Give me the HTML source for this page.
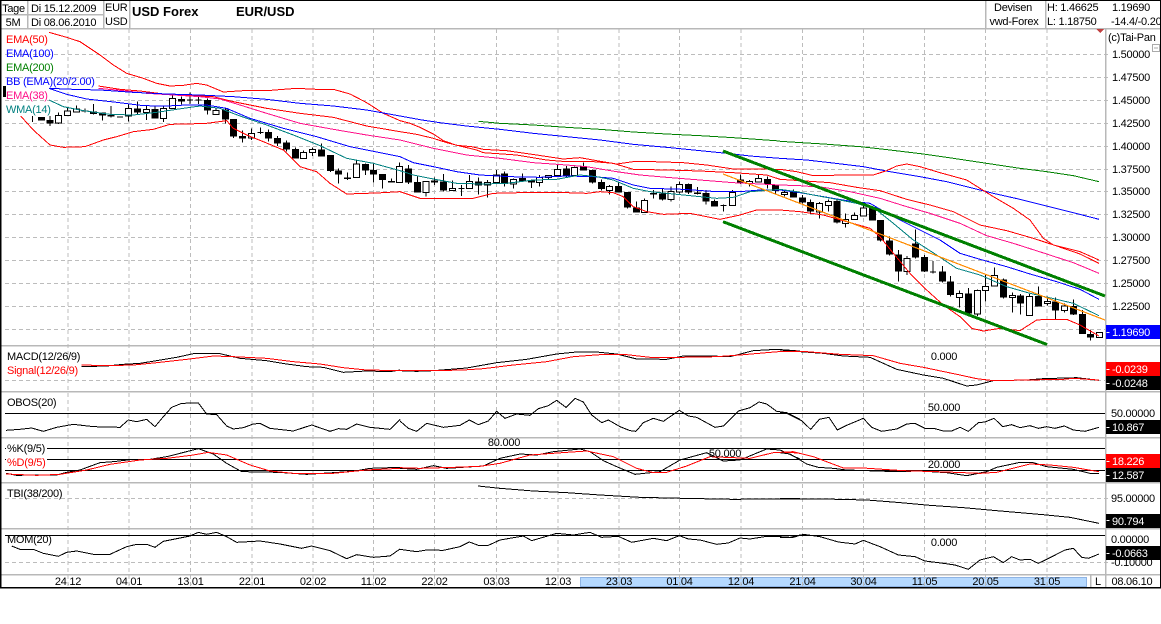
<!DOCTYPE html>
<html><head><meta charset="utf-8"><title>EUR/USD</title>
<style>
html,body{margin:0;padding:0;background:#fff;width:1161px;height:624px;overflow:hidden}
svg{display:block}
text{font-family:"Liberation Sans",sans-serif;font-size:11px;letter-spacing:-.25px;fill:#000}
.c{text-anchor:middle}
.w{fill:#fff}
.g{stroke:#bcbcbc;stroke-width:1;stroke-dasharray:4 3;fill:none}
.s{stroke:#b8b8b8;stroke-width:1.5;fill:none}
.k{stroke:#000;stroke-width:1;fill:none}
polyline{fill:none;stroke-width:3;stroke-linejoin:round}
.r{stroke:#f00}.b{stroke:#00f}.gr{stroke:#008000}.m{stroke:#ff1088}.t{stroke:#008080}.bk{stroke:#000}
.lo polyline{stroke-width:3}
</style></head><body>
<svg width="1161" height="624" viewBox="0 0 1161 624" xmlns="http://www.w3.org/2000/svg">
<rect width="1161" height="624" fill="#fff"/>
<!-- date axis bar -->
<rect x="580.5" y="577.5" width="506" height="9" fill="#b5d9ff" stroke="#8fb4e4"/>
<!-- date labels -->
<g class="dl">
<text class="c" x="68" y="585">24.12</text><text class="c" x="129" y="585">04.01</text><text class="c" x="190.5" y="585">13.01</text><text class="c" x="252" y="585">22.01</text><text class="c" x="313" y="585">02.02</text><text class="c" x="373.5" y="585">11.02</text><text class="c" x="434.5" y="585">22.02</text><text class="c" x="496.5" y="585">03.03</text><text class="c" x="558" y="585">12.03</text><text class="c" x="619" y="585">23.03</text><text class="c" x="679.5" y="585">01.04</text><text class="c" x="741" y="585">12.04</text><text class="c" x="802.5" y="585">21.04</text><text class="c" x="863.5" y="585">30.04</text><text class="c" x="924.5" y="585">11.05</text><text class="c" x="985.5" y="585">20.05</text><text class="c" x="1047" y="585">31.05</text>
</g>
<!-- grid -->
<g shape-rendering="crispEdges">
<path class="g" d="M68 29V588M129 29V588M190.500 29V588M252 29V588M313 29V588M373.500 29V588M434.500 29V588M496.500 29V588M558 29V588M619 29V588M679.500 29V588M741 29V588M802.500 29V588M863.500 29V588M924.500 29V588M985.500 29V588M1047 29V588"/>
<path class="g" d="M5 54.500H1110M5 77.500H1110M5 100.500H1110M5 123.500H1110M5 146.500H1110M5 169.500H1110M5 191.500H1110M5 214.500H1110M5 237.500H1110M5 260.500H1110M5 283.500H1110M5 306.500H1110M5 329.500H1110M5 380.500H1110M5 498.500H1110M5 562.500H1110"/>
<path class="k" d="M5 413.500H1105M5 448.500H1105M5 459.500H1105M5 470.500H1105M5 535.500H1105"/>
<path class="s" d="M0 28.500H1160M0 345.500H1160M0 391.500H1160M0 437.500H1160M0 482.500H1160M0 528.500H1160M0 574.500H1160M1105.500 28V588M27.500 1V28M103.500 1V28M129.500 1V28M985.500 1V28M1045.500 1V28M0 14.500H103M1090.500 575V587"/>
<path d="M0 .5H1161M1160.500 0V588M0 587.500H1161M.5 0V588" stroke="#000" stroke-width="1" fill="none"/>
<path d="M1 0V588M0 588H1161" stroke="#000" stroke-width="1" fill="none"/>
<rect x="3" y="86" width="3" height="11" fill="#000"/>
</g>
<!-- candles group 1 -->
<g shape-rendering="crispEdges">
<g transform="scale(.33333)" fill="none">
<path stroke="#000" stroke-width="3" d="M97 348V366M124 351V362M150 348V378M176 338V372M203 322V346M229 316V338M255 326V338M281 312V344M307 338V362M333 318V352M386 310V365M412 305V342M439 318V360M465 318V356M490 316V366M517 285V325M544 290V313M570 277V312M596 285V312M622 296V344M648 325V345M676 326V370M700 357V414M727 392V428M755 385V420M782 382V402M806 388V425M832 408V438M859 422V455M886 442V476M910 452V476M937 442V468M964 430V470M991 465V516M1016 505V550M1042 517V540M1069 482V534M1096 490V525M1121 492V548M1147 522V566M1174 535V548M1198 488V548M351 351H369M561 300H579M587 300H605M773 398H791"/>
<path stroke="#000" stroke-width="21" d="M124 351V362M150 360V370M255 331V335M281 335V342M307 338V347M333 345V350M412 325V338M465 327V356M544 297V304M622 300V332M676 329V359M700 357V410M727 408V416M806 396V416M832 414V431M859 428V449M886 447V476M964 448V470M991 465V513M1016 512V524M1042 532V537M1096 492V512M1121 510V524M1147 522V540M1174 543V548"/>
<path fill="#fff" stroke="#000" stroke-width="3" d="M167 346h18V369h-18zM194 333h18V346h-18zM220 327h18V336h-18zM377 326h18V348h-18zM430 329h18V338h-18zM481 325h18V356h-18zM508 296h18V325h-18zM639 331h18V343h-18zM746 400h18V414h-18zM901 457h18V475h-18zM928 448h18V457h-18zM1060 492h18V532h-18zM1189 500h18V548h-18z"/>
</g>
<!-- candles group 2 -->
<g transform="translate(400 120) scale(.33333)" fill="none">
<path stroke="#000" stroke-width="3" d="M25 135V192M52 170V218M78 184V230M104 172V195M130 162V215M157 182V212M184 195V228M208 165V205M235 172V224M262 180V232M289 150V188M314 155V200M341 175V206M367 160V186M394 178V204M418 165V200M445 165V178M472 132V168M499 138V172M524 140V168M550 127V152M577 148V190M604 178V212M628 195V224M655 188V218M682 216V266M710 245V277M733 235V277M760 210V236M787 205V242M813 200V245M838 185V220M865 190V222M892 201V224M918 210V254M943 238V260M970 253V275M997 210V256M1021 163V192M1048 180V200M1075 165V188M1102 170V206M1126 193V220M175 205H193M961 257H979"/>
<path stroke="#000" stroke-width="21" d="M25 145V188M52 186V218M104 182V188M130 185V212M235 184V196M314 160V192M367 174V184M394 181V187M499 145V168M550 140V152M577 150V188M604 186V207M655 198V218M682 216V263M710 262V277M760 219V223M787 220V238M865 192V218M892 217V222M918 219V245M943 243V260M1021 178V191M1102 177V192M1126 195V213"/>
<path fill="#fff" stroke="#000" stroke-width="3" d="M69 184h18V217h-18zM148 205h18V212h-18zM199 185h18V205h-18zM253 188h18V195h-18zM280 165h18V188h-18zM332 178h18V192h-18zM409 172h18V187h-18zM436 166h18V172h-18zM463 148h18V167h-18zM515 142h18V167h-18zM619 199h18V212h-18zM724 241h18V277h-18zM804 214h18V238h-18zM829 193h18V216h-18zM988 217h18V256h-18zM1039 184h18V190h-18zM1066 175h18V186h-18z"/>
</g>
<!-- candles group 3 -->
<g transform="translate(780 140) scale(.33333)" fill="none">
<path stroke="#000" stroke-width="3" d="M13 150V170M40 148V173M67 165V190M92 178V222M118 186V236M145 178V215M171 180V250M197 220V262M223 218V240M250 198V230M277 198V242M302 240V304M328 290V346M355 330V425M381 348V405M406 268V355M433 345V396M459 363V400M487 378V428M511 408V470M538 452V503M565 444V522M592 448V528M616 405V485M643 382V440M670 415V475M697 458V518M722 462V524M748 462V527M775 440V500M802 470V496M827 472V538M853 490V518M880 478V525M907 510V582M932 570V602M958 577V592M450 396H468"/>
<path stroke="#000" stroke-width="21" d="M40 155V173M67 172V188M92 186V215M171 183V248M277 202V242M302 240V302M328 302V344M355 343V394M406 310V353M433 351V394M487 394V425M511 424V465M565 460V521M670 418V472M722 466V490M775 468V500M827 484V512M880 498V523M907 522V582M932 582V592"/>
<path fill="#fff" stroke="#000" stroke-width="3" d="M4 158h18V164h-18zM109 190h18V216h-18zM136 184h18V197h-18zM188 239h18V250h-18zM214 226h18V238h-18zM241 204h18V228h-18zM372 355h18V394h-18zM529 460h18V472h-18zM583 451h18V522h-18zM607 439h18V451h-18zM634 406h18V438h-18zM688 466h18V472h-18zM739 469h18V526h-18zM793 484h18V490h-18zM844 498h18V512h-18zM949 577h18V592h-18z"/>
</g>
<!-- indicator lines -->
<g transform="scale(.33333)">
<polyline class="r" points="147,97 200,112 240,125 270,145 300,165 340,195 380,220 430,235 470,250 510,258 550,256 590,250 620,255 670,276 730,272 800,272 850,268 890,265 950,268 1000,268 1050,282 1100,308 1150,340 1200,362"/>
<polyline class="r" points="62,348 100,390 150,435 190,442 255,440 310,420 350,410 400,395 460,388 510,373 560,372 620,370 680,362 700,385 740,405 790,425 850,450 900,500 950,515 990,550 1040,582 1100,580 1150,578 1200,575"/>
<polyline class="r" points="295,258 360,268 420,273 500,283 580,287 640,290 700,305 800,325 900,340 1000,352 1100,378 1200,395"/>
<polyline class="m" points="295,265 370,272 440,280 520,285 600,290 660,297 720,315 800,340 900,370 1000,388 1100,405 1200,420"/>
<polyline class="b" points="147,265 220,268 300,270 400,277 500,282 600,285 700,290 800,298 900,310 1000,318 1100,330 1200,348"/>
<polyline class="b" points="147,265 200,283 260,297 350,307 430,317 500,318 560,315 620,315 680,325 750,355 850,385 950,410 1050,440 1200,470"/>
<polyline class="t" points="147,300 190,320 250,332 330,343 400,345 470,337 530,328 600,318 660,325 720,348 800,375 880,405 960,437 1040,475 1120,490 1200,512"/>
</g>
<g transform="translate(400 120) scale(.33333)">
<polyline class="gr" points="235,4 300,10 400,15 500,22 600,28 700,36 800,42 900,47 1000,53 1140,63"/>
<polyline class="b" points="0,-12 66,0 120,8 200,18 300,28 400,40 500,50 600,60 700,73 800,82 900,92 1000,102 1050,108 1140,115"/>
<polyline class="r" points="0,2 30,10 60,22 100,42 130,62 170,76 215,80 250,88 320,92 410,105 490,117 540,113 590,122 650,132 700,125 760,125 850,128 920,135 1000,147 1140,148"/>
<polyline class="r" points="0,35 50,43 100,55 140,68 180,78 230,90 250,98 350,105 440,120 500,125 580,125 640,130 700,148 800,150 900,153 1000,158 1100,165 1140,178"/>
<polyline class="m" points="0,60 100,85 200,105 300,115 400,128 500,135 560,140 650,155 720,165 800,172 900,180 1000,188 1140,195"/>
<polyline class="b" points="0,110 40,128 100,140 170,155 240,165 330,170 420,172 500,168 580,170 640,175 700,195 750,205 850,208 950,215 1020,215 1080,210 1140,210"/>
<polyline class="t" points="0,152 40,165 90,175 170,190 250,192 320,190 400,180 470,178 540,165 590,170 640,180 700,205 750,215 850,225 950,235 1000,232 1050,215 1140,208"/>
<polyline class="r" points="0,215 60,235 120,235 220,235 280,220 400,217 500,218 560,220 600,215 640,218 670,230 700,260 740,275 790,283 870,280 960,298 1020,285 1070,270 1140,270"/>
</g>
<g transform="translate(780 140) scale(.33333)">
<polyline class="gr" points="0,4 130,12 240,20 330,30 430,42 520,55 620,70 720,85 800,95 880,107 957,125"/>
<polyline class="b" points="0,55 80,60 150,68 250,80 330,95 420,110 500,125 600,150 640,160 720,178 800,198 880,218 957,238"/>
<polyline class="r" points="0,88 50,95 100,107 200,105 280,105 320,92 350,78 380,72 420,80 480,98 560,120 600,145 640,170 700,205 750,240 790,295 820,315 860,325 900,335 957,360"/>
<polyline class="r" points="0,118 60,122 150,128 230,142 300,152 380,178 450,195 520,215 600,255 680,272 760,295 830,318 900,342 957,370"/>
<polyline class="m" points="0,135 60,137 130,142 210,155 300,175 380,200 450,220 540,250 620,287 700,310 800,342 880,368 957,400"/>
<polyline class="b" points="0,150 60,158 130,170 200,182 270,190 330,225 410,265 480,300 540,340 600,358 680,380 750,402 830,425 900,448 957,478"/>
<polyline class="t" points="0,148 50,155 100,165 170,178 230,190 290,210 340,250 400,300 470,345 530,385 600,405 680,440 750,460 830,478 880,490 957,527"/>
<polyline class="r" points="0,210 60,215 130,225 200,245 270,265 300,290 340,340 390,400 440,450 490,495 540,530 575,565 610,573 660,565 720,572 770,540 800,538 860,538 900,555 957,588"/>
</g>
<!-- trend lines -->
<path d="M723 174L1105 320" stroke="#ff8c00" stroke-width="1.2" fill="none"/>
<path d="M723 151L1105 296M723 221.700L1047 344.500" stroke="#008000" stroke-width="3" fill="none"/>
<!-- lower panels -->
<g class="lo">
<g transform="translate(0 340) scale(.33333)">
<polyline class="bk" points="245,80 320,78 370,73 420,70 470,62 530,52 580,41 660,41 720,55 800,62 860,72 920,80 970,82 1030,97 1100,93 1170,95 1200,90"/>
<polyline class="r" points="245,75 320,77 400,75 470,68 560,58 640,48 700,50 800,55 880,65 960,72 1030,83 1100,90 1200,92"/>
<polyline class="bk" points="18,271 60,268 95,264 130,274 170,262 220,253 280,260 360,262 385,240 410,245 440,238 465,260 490,230 515,202 545,190 595,189 620,222 650,224 680,258 700,267 730,263 760,252 780,250 810,265 880,273 935,255 990,274 1015,266 1040,268 1070,252 1110,262 1170,268 1200,238"/>
<polyline class="bk" points="18,400 50,406 120,405 170,405 200,397 240,390 300,368 340,365 400,358 450,358 500,350 540,340 595,326 640,342 680,370 725,395 800,396 850,398 920,403 1000,398 1060,394 1110,385 1200,382"/>
<polyline class="r" points="18,402 110,406 180,403 260,390 330,373 420,360 500,355 580,345 625,337 680,345 750,375 810,393 880,400 1000,400 1100,390 1200,385"/>
<polyline class="bk" points="35,618 60,628 100,628 130,640 175,649 200,637 230,633 280,643 330,643 380,620 410,613 440,613 465,622 490,604 570,588 595,577 620,583 650,577 680,590 710,607 780,603 840,612 905,625 935,618 990,632 1040,656 1070,644 1120,652 1170,648 1200,627"/>
</g>
<g transform="translate(400 340) scale(.33333)">
<polyline class="bk" points="0,92 50,94 100,92 200,84 290,68 380,58 470,42 530,36 590,36 650,42 710,57 800,58 850,48 930,48 990,50 1060,32 1130,28 1200,33"/>
<polyline class="r" points="0,91 100,92 190,90 250,86 340,75 440,65 520,50 600,44 680,44 750,52 840,52 950,50 1020,45 1100,38 1160,33 1200,34"/>
<polyline class="bk" points="0,243 25,265 50,274 80,250 130,262 180,256 208,240 235,254 265,243 290,214 315,235 350,222 390,226 415,206 445,197 470,181 498,202 525,175 550,186 575,225 605,248 625,240 660,260 690,272 708,274 730,248 760,235 790,244 838,211 865,228 890,232 945,262 970,258 1015,213 1050,203 1077,186 1100,192 1130,214 1160,218 1200,238"/>
<polyline class="bk" points="0,385 50,388 100,377 140,385 250,378 300,355 360,342 410,345 460,335 540,327 570,335 610,362 650,380 705,403 780,395 840,360 920,338 970,363 1020,360 1100,327 1140,330 1200,357"/>
<polyline class="r" points="0,383 60,385 160,382 240,379 300,370 390,345 500,337 560,333 640,350 710,385 760,398 800,397 860,378 930,350 1000,353 1050,355 1120,338 1170,337 1200,340"/>
<polyline class="bk" points="234,438 300,445 400,453 500,458 600,465 720,472 850,475 1000,478 1200,476"/>
<polyline class="bk" points="0,628 50,635 80,630 130,631 180,620 208,606 235,616 265,616 300,600 370,588 395,602 470,580 520,585 570,577 605,592 655,589 695,607 760,595 800,602 838,587 865,597 900,600 950,613 985,609 1020,594 1050,597 1100,589 1140,590 1170,592 1200,585"/>
</g>
<g transform="translate(780 340) scale(.33333)">
<polyline class="bk" points="0,30 60,35 130,40 190,48 270,52 350,88 430,105 490,115 560,138 590,135 640,122 740,120 790,116 890,113 957,121"/>
<polyline class="r" points="0,34 80,35 180,43 280,47 360,70 430,82 540,105 590,116 640,122 740,120 850,118 880,115 957,120"/>
<polyline class="bk" points="0,217 20,220 65,242 92,268 118,238 147,232 172,270 200,256 250,235 275,262 305,274 350,267 380,252 405,250 435,265 465,266 490,273 515,273 540,262 565,274 595,248 615,246 642,235 668,260 695,254 720,263 750,257 775,265 800,260 825,265 853,258 880,270 915,274 957,262"/>
<polyline class="bk" points="0,338 30,342 80,372 115,382 160,385 200,390 350,395 420,393 500,398 560,407 620,395 650,382 720,367 760,368 800,380 880,388 930,400 957,400"/>
<polyline class="r" points="0,337 40,335 100,350 190,384 250,384 370,392 500,396 600,400 650,397 750,372 810,375 880,382 957,395"/>
<polyline class="bk" points="0,476 130,477 260,480 350,487 450,496 550,503 650,512 800,525 870,532 957,550"/>
<polyline class="bk" points="0,592 40,592 70,583 120,590 175,606 225,612 250,601 300,620 355,645 405,650 435,663 490,670 525,675 565,688 600,660 640,650 670,668 695,650 720,660 750,658 775,670 800,658 855,630 880,625 905,652 925,655 957,642"/>
</g>
</g>
</g>
<!-- value boxes -->
<g shape-rendering="crispEdges">
<rect x="1106" y="325" width="54" height="14" fill="#00f"/>
<rect x="1106" y="362" width="54" height="14" fill="#f00"/>
<rect x="1106" y="376" width="54" height="14" fill="#000"/>
<rect x="1106" y="420" width="54" height="14" fill="#000"/>
<rect x="1106" y="454" width="54" height="14" fill="#f00"/>
<rect x="1106" y="468" width="54" height="14" fill="#000"/>
<rect x="1106" y="514" width="54" height="14" fill="#000"/>
<path d="M1096 29h8l-4 4z" fill="#c04040"/>
<path d="M1152.500 44.500h7v7h-7zM1154 48h4" fill="#fff" stroke="#aaa"/>
<rect x="6" y="443" width="41" height="11" fill="#fff"/>
<rect x="6" y="457" width="41" height="11" fill="#fff"/>
</g>
<!-- axis labels -->
<text x="1112" y="58">1.50000</text><text x="1112" y="81">1.47500</text><text x="1112" y="104">1.45000</text><text x="1112" y="127">1.42500</text><text x="1112" y="150">1.40000</text><text x="1112" y="173">1.37500</text><text x="1112" y="195">1.35000</text><text x="1112" y="218">1.32500</text><text x="1112" y="241">1.30000</text><text x="1112" y="264">1.27500</text><text x="1112" y="287">1.25000</text><text x="1112" y="310">1.22500</text>
<text x="1111" y="417">50.00000</text><text x="1111" y="502">95.00000</text><text x="1111" y="543">0.00000</text><text x="1111" y="566">-0.10000</text>
<rect x="1106" y="546" width="54" height="14" fill="#000" shape-rendering="crispEdges"/>
<path d="M1106.500 332.500h3M1106.500 369.500h3M1106.500 383.500h3M1106.500 427.500h3M1106.500 461.500h3M1106.500 475.500h3M1106.500 520.500h3M1106.500 553.500h3" stroke="#fff" shape-rendering="crispEdges"/>
<text class="w" x="1112" y="336">1.19690</text>
<text class="w" x="1112" y="373">-0.0239</text><text class="w" x="1112" y="387">-0.0248</text>
<text class="w" x="1112" y="431">10.867</text>
<text class="w" x="1112" y="465">18.226</text><text class="w" x="1112" y="479">12.587</text>
<text class="w" x="1112" y="525">90.794</text>
<text class="w" x="1112" y="557">-0.0663</text>
<text x="1111.500" y="585">08.06.10</text>
<text x="1095" y="585">L</text>
<text x="1108" y="41">(c)Tai-Pan</text>
<!-- header -->
<text class="c" x="13.500" y="12">Tage</text><text class="c" x="13" y="26">5M</text>
<text x="31" y="12">Di 15.12.2009</text><text x="31" y="26">Di 08.06.2010</text>
<text x="105" y="11">EUR</text><text x="105" y="25">USD</text>
<text x="132" y="16" style="font-weight:bold;font-size:13px;letter-spacing:0">USD Forex</text>
<text x="236" y="16" style="font-weight:bold;font-size:13px;letter-spacing:0">EUR/USD</text>
<text class="c" x="1013" y="11">Devisen</text><text class="c" x="1014" y="25">vwd-Forex</text>
<text x="1047" y="11">H: 1.46625</text><text x="1047" y="25">L: 1.18750</text>
<text x="1112" y="11">1.19690</text><text x="1111" y="25">-14.4/-0.20</text>
<rect x="1160" y="0" width="1" height="588" fill="#000"/>
<!-- legends -->
<text x="6" y="43" style="fill:#f00">EMA(50)</text>
<text x="6" y="57" style="fill:#00f">EMA(100)</text>
<text x="6" y="71" style="fill:#008000">EMA(200)</text>
<text x="6" y="85" style="fill:#00f">BB (EMA)(20/2.00)</text>
<text x="6" y="99" style="fill:#ff1088">EMA(38)</text>
<text x="6" y="113" style="fill:#008080">WMA(14)</text>
<text x="7" y="360">MACD(12/26/9)</text>
<text x="7" y="374" style="fill:#f00">Signal(12/26/9)</text>
<text x="7" y="406">OBOS(20)</text>
<text x="7" y="452">%K(9/5)</text>
<text x="7" y="466" style="fill:#f00">%D(9/5)</text>
<text x="7" y="497">TBI(38/200)</text>
<text x="7" y="543">MOM(20)</text>
<text class="c" x="944" y="360">0.000</text>
<text class="c" x="944" y="411">50.000</text>
<text class="c" x="944" y="468">20.000</text>
<text class="c" x="504" y="446">80.000</text>
<text class="c" x="725" y="457">50.000</text>
<text class="c" x="944" y="546">0.000</text>
</svg>
</body></html>
